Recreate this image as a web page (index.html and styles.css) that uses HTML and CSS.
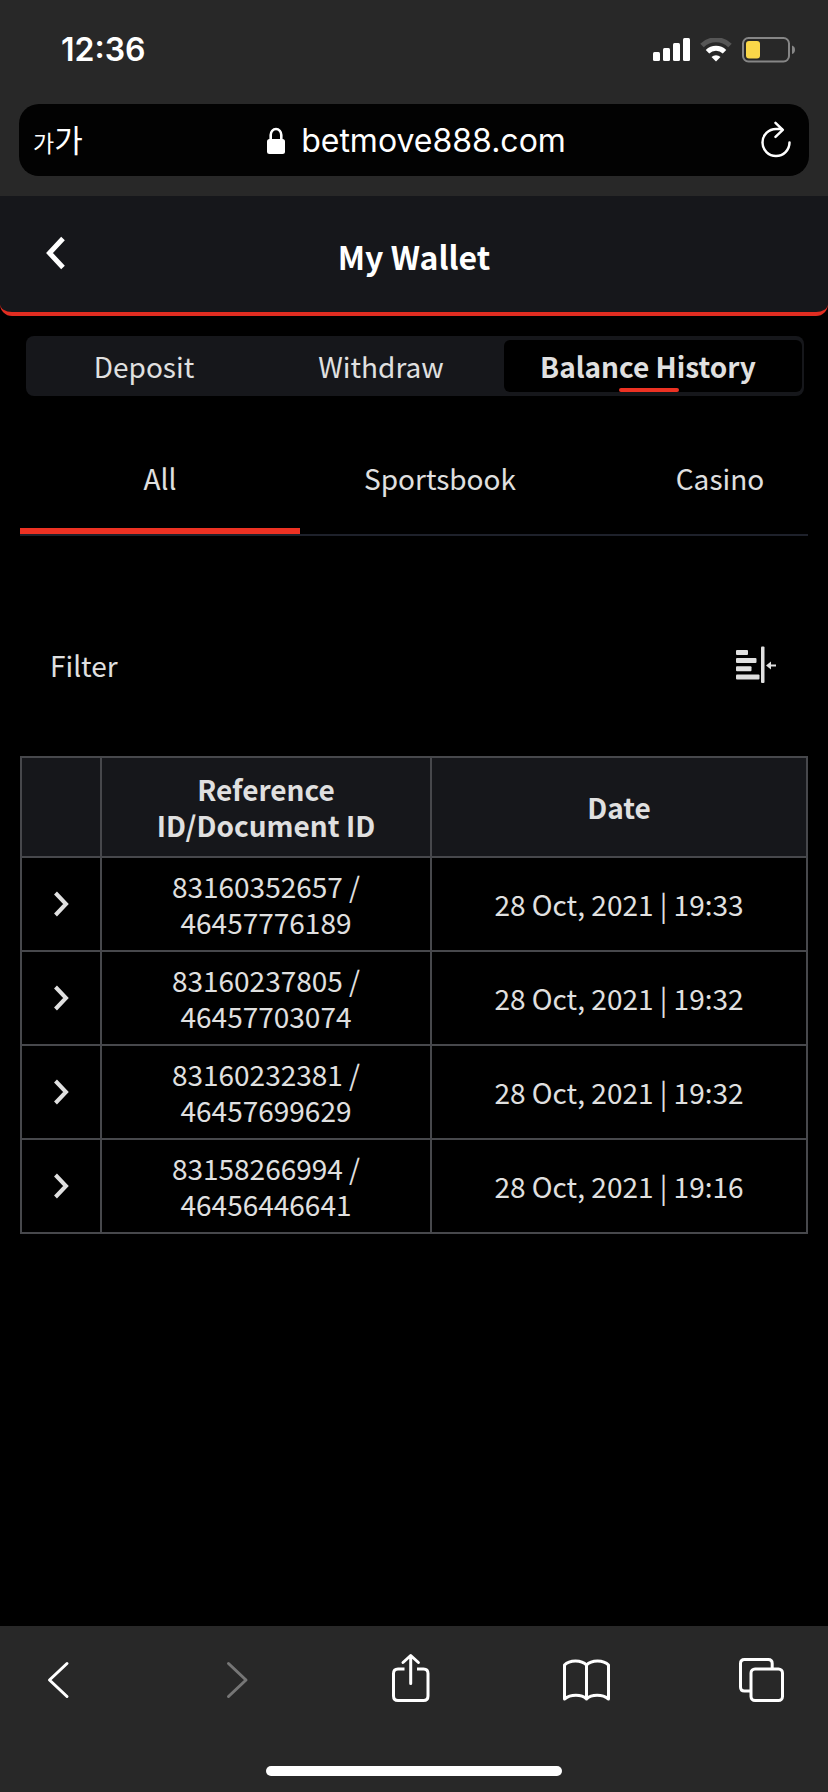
FILE: index.html
```html
<!DOCTYPE html>
<html lang="en">
<head>
<meta charset="utf-8">
<meta name="viewport" content="width=device-width, initial-scale=1">
<title>My Wallet</title>
<link rel="stylesheet" href="styles.css">
</head>
<body>
<div class="browser-top">
  <div class="status">
    <span class="clock">12:36</span>
    <div class="status-icons">
      <svg width="37" height="24" viewBox="0 0 37 24" fill="#fff" aria-hidden="true">
        <rect x="0" y="14" width="7" height="9" rx="1.5"/><rect x="10" y="10" width="7" height="13" rx="1.5"/><rect x="20" y="5" width="7" height="18" rx="1.5"/><rect x="30" y="0" width="7" height="23" rx="1.5"/>
      </svg>
      <svg width="32" height="24" viewBox="0 0 32 24" aria-hidden="true">
        <path d="M2 7.500a20 20 0 0 1 28 0" fill="none" stroke="#565656" stroke-width="5"/>
        <path d="M7.500 13.800a12.200 12.200 0 0 1 17 0" fill="none" stroke="#fff" stroke-width="5"/>
        <path d="M11.500 19a6.500 6.500 0 0 1 9 0L16 23.500z" fill="#fff"/>
      </svg>
      <svg width="54" height="26" viewBox="0 0 54 26" aria-hidden="true">
        <rect x="1" y="1" width="46" height="23.500" rx="5.500" fill="none" stroke="#868686" stroke-width="2"/>
        <rect x="4" y="4" width="14" height="17.500" rx="3" fill="#fad749"/>
        <path d="M50 8.500q3 1 3 4.300t-3 4.300z" fill="#868686"/>
      </svg>
    </div>
  </div>
  <div class="address">
    <button class="text-size" aria-label="Text size"><span class="small">가</span><span class="large">가</span></button>
    <div class="url">
      <svg width="18" height="28" viewBox="0 0 18 28" aria-hidden="true">
        <path d="M3.700 13V8a5.300 6 0 0 1 10.600 0v5" fill="none" stroke="#fff" stroke-width="2.600"/>
        <rect y="12" width="18" height="15" rx="2.500" fill="#fff"/>
      </svg>
      <span>betmove888.com</span>
    </div>
    <button class="reload" aria-label="Reload">
      <svg width="32" height="38" viewBox="0 0 32 38" fill="none" stroke="#fff" stroke-width="2.500" stroke-linecap="round" stroke-linejoin="round" aria-hidden="true">
        <path d="M29.500 21.500a13.500 13.500 0 1 1-13.500-13.500h6M15.500 1.800l7.300 7-7.300 7"/>
      </svg>
    </button>
  </div>
</div>

<header class="page-header">
  <button class="back" aria-label="Back">
    <svg width="20" height="34" viewBox="0 0 20 34" fill="none" stroke="#fff" stroke-width="5" aria-hidden="true"><path d="M17 2.500L3.500 17 17 31.500"/></svg>
  </button>
  <h1>My Wallet</h1>
</header>

<main>
  <nav class="wallet-tabs" aria-label="Wallet">
    <button>Deposit</button>
    <button>Withdraw</button>
    <button class="active" aria-current="page">Balance History</button>
  </nav>
  <nav class="categories" aria-label="Category">
    <button class="active" aria-current="true">All</button>
    <button>Sportsbook</button>
    <button>Casino</button>
  </nav>
  <button class="filter">
    <span>Filter</span>
    <svg width="40" height="38" viewBox="0 0 40 38" fill="#e0e0e0" aria-hidden="true">
      <rect y="4" width="12" height="5" rx="1"/><rect y="12" width="20.500" height="5" rx="1"/><rect y="20.300" width="15.500" height="5" rx="1"/><rect y="28.400" width="23.500" height="5" rx="1"/>
      <rect x="25" y="0.500" width="3.500" height="36.500" rx="1"/>
      <path d="M30 19.500l5-4v3h5v2h-5v3z"/>
    </svg>
  </button>
  <table class="history">
    <colgroup><col class="col-toggle"><col class="col-ref"><col></colgroup>
    <thead>
      <tr><td></td><th scope="col">Reference<br>ID/Document ID</th><th scope="col">Date</th></tr>
    </thead>
    <tbody>
      <tr><td><button class="expand" aria-label="Show details"><svg width="16" height="26" viewBox="0 0 16 26" aria-hidden="true"><path d="M2.500 2L13 13 2.500 24"/></svg></button></td><td>83160352657 /<br>46457776189</td><td>28 Oct, 2021 | 19:33</td></tr>
      <tr><td><button class="expand" aria-label="Show details"><svg width="16" height="26" viewBox="0 0 16 26" aria-hidden="true"><path d="M2.500 2L13 13 2.500 24"/></svg></button></td><td>83160237805 /<br>46457703074</td><td>28 Oct, 2021 | 19:32</td></tr>
      <tr><td><button class="expand" aria-label="Show details"><svg width="16" height="26" viewBox="0 0 16 26" aria-hidden="true"><path d="M2.500 2L13 13 2.500 24"/></svg></button></td><td>83160232381 /<br>46457699629</td><td>28 Oct, 2021 | 19:32</td></tr>
      <tr><td><button class="expand" aria-label="Show details"><svg width="16" height="26" viewBox="0 0 16 26" aria-hidden="true"><path d="M2.500 2L13 13 2.500 24"/></svg></button></td><td>83158266994 /<br>46456446641</td><td>28 Oct, 2021 | 19:16</td></tr>
    </tbody>
  </table>
</main>

<footer class="browser-bottom">
  <nav class="toolbar" aria-label="Browser">
    <button aria-label="Previous page"><svg width="60" height="60" viewBox="0 0 60 60"><path d="M39 13.500L21.500 30 39 46.500"/></svg></button>
    <button class="next" aria-label="Next page" disabled><svg width="60" height="60" viewBox="0 0 60 60"><path d="M24.500 13.500L42 30 24.500 46.500"/></svg></button>
    <button aria-label="Share"><svg width="60" height="60" viewBox="0 0 60 60"><path d="M24.500 19H18q-4.500 0-4.500 4.500V46q0 4.500 4.500 4.500h25.500q4.500 0 4.500-4.500V23.500Q48 19 43.500 19H37" stroke-linecap="butt"/><path d="M30.700 33.500V5.500M23 12.500l7.700-7 7.700 7"/></svg></button>
    <button aria-label="Bookmarks"><svg width="60" height="60" viewBox="0 0 60 60"><path d="M8.500 49V15c5-5.500 17-5.500 22 0 5-5.500 17-5.500 22 0v34c-6-5-17-5-22 0-5-5-16-5-22 0zM30.500 15v34"/></svg></button>
    <button aria-label="Tabs"><svg width="60" height="60" viewBox="0 0 60 60"><rect x="19" y="19" width="31.500" height="31.500" rx="4"/><path d="M40.200 19v-5.500q0-4-4-4H12.500q-4 0-4 4v23.500q0 4 4 4H19" stroke-linecap="butt"/></svg></button>
  </nav>
  <div class="home-bar"></div>
</footer>
</body>
</html>
```
FILE: styles.css
```css
* { box-sizing: border-box; }

body {
  margin: 0;
  min-height: 100vh;
  display: flex;
  flex-direction: column;
  background: #000;
  color: #e0e0e0;
  font: 28px/36px "Noto Sans CJK KR", "Noto Sans", sans-serif;
}

button {
  margin: 0;
  padding: 0;
  border: 0;
  background: none;
  color: inherit;
  font: inherit;
}

svg { display: block; }

.browser-top {
  background: #282828;
  color: #fff;
  padding: 0 19px 20px;
}

.status {
  height: 104px;
  padding: 0 13px 4px 42px;
  display: flex;
  align-items: center;
  justify-content: space-between;
}

.clock { font: 600 32px/40px Inter, "Liberation Sans", sans-serif; }

.status-icons {
  display: flex;
  align-items: center;
  gap: 10px;
}

.address {
  height: 72px;
  padding: 0 17px 0 14px;
  border-radius: 20px;
  background: #020202;
  display: grid;
  grid-template-columns: 1fr auto 1fr;
  align-items: center;
}

.text-size {
  justify-self: start;
  display: flex;
  align-items: baseline;
  line-height: 40px;
}

.text-size .small { font-size: 23px; }
.text-size .large { font-size: 31px; }

.url {
  padding: 2px 0 0 8px;
  display: flex;
  align-items: center;
  gap: 16px;
  font: 32px/40px Inter, "Liberation Sans", sans-serif;
}

.reload { justify-self: end; }

.page-header {
  height: 120px;
  padding: 0 46px;
  background: #16171b;
  border-bottom: 4px solid #e12d21;
  border-radius: 0 0 12px 12px;
  display: grid;
  grid-template-columns: 1fr auto 1fr;
  align-items: center;
}

.back {
  justify-self: start;
  padding-bottom: 2px;
}

h1 {
  margin: 0;
  padding-top: 4px;
  color: #fff;
  font-size: 32px;
  line-height: 40px;
}

main {
  flex: 1;
  padding: 20px;
}

.wallet-tabs {
  margin: 0 4px 0 6px;
  padding: 4px 2px 4px 0;
  border-radius: 8px;
  background: #16171b;
  display: grid;
  grid-template-columns: 236fr 238fr 302fr;
}

.wallet-tabs button {
  height: 52px;
  border-radius: 6px;
}

.wallet-tabs .active {
  position: relative;
  margin-left: 4px;
  padding-right: 10px;
  background: #000;
  font-weight: 700;
}

.wallet-tabs .active::after {
  content: "";
  position: absolute;
  left: 50%;
  bottom: 0;
  width: 60px;
  height: 4px;
  margin-left: -34px;
  border-radius: 2px;
  background: #ed3223;
}

.categories {
  margin-top: 36px;
  border-bottom: 2px solid #1e212b;
  display: flex;
  overflow: hidden;
}

.categories button {
  flex: 0 0 280px;
  height: 102px;
  padding-bottom: 4px;
  border-bottom: 6px solid transparent;
}

.categories .active { border-bottom-color: #ed3223; }

.filter {
  width: 100%;
  margin: 110px 0 72px;
  padding: 0 32px 0 30px;
  display: flex;
  align-items: center;
  justify-content: space-between;
}

.history {
  width: 100%;
  table-layout: fixed;
  border-collapse: collapse;
  text-align: center;
}

.col-toggle { width: 80px; }
.col-ref { width: 330px; }

.history th,
.history td {
  padding: 10px 0;
  border: 2px solid #47484c;
}

.history thead { background: #16171b; }
.history th { padding: 13px 0; }

.expand {
  display: block;
  margin: 0 auto;
}

.expand path {
  fill: none;
  stroke: #e0e0e0;
  stroke-width: 4;
}

.browser-bottom {
  background: #282828;
  padding: 24px 0 16px;
}

.toolbar {
  padding: 0 36px 0 28px;
  display: flex;
  justify-content: space-between;
}

.toolbar svg {
  fill: none;
  stroke: #fff;
  stroke-width: 3;
  stroke-linecap: round;
  stroke-linejoin: round;
}

.toolbar .next svg { stroke: #767676; }

.home-bar {
  width: 296px;
  height: 10px;
  margin: 56px auto 0;
  border-radius: 5px;
  background: #fff;
}
```
